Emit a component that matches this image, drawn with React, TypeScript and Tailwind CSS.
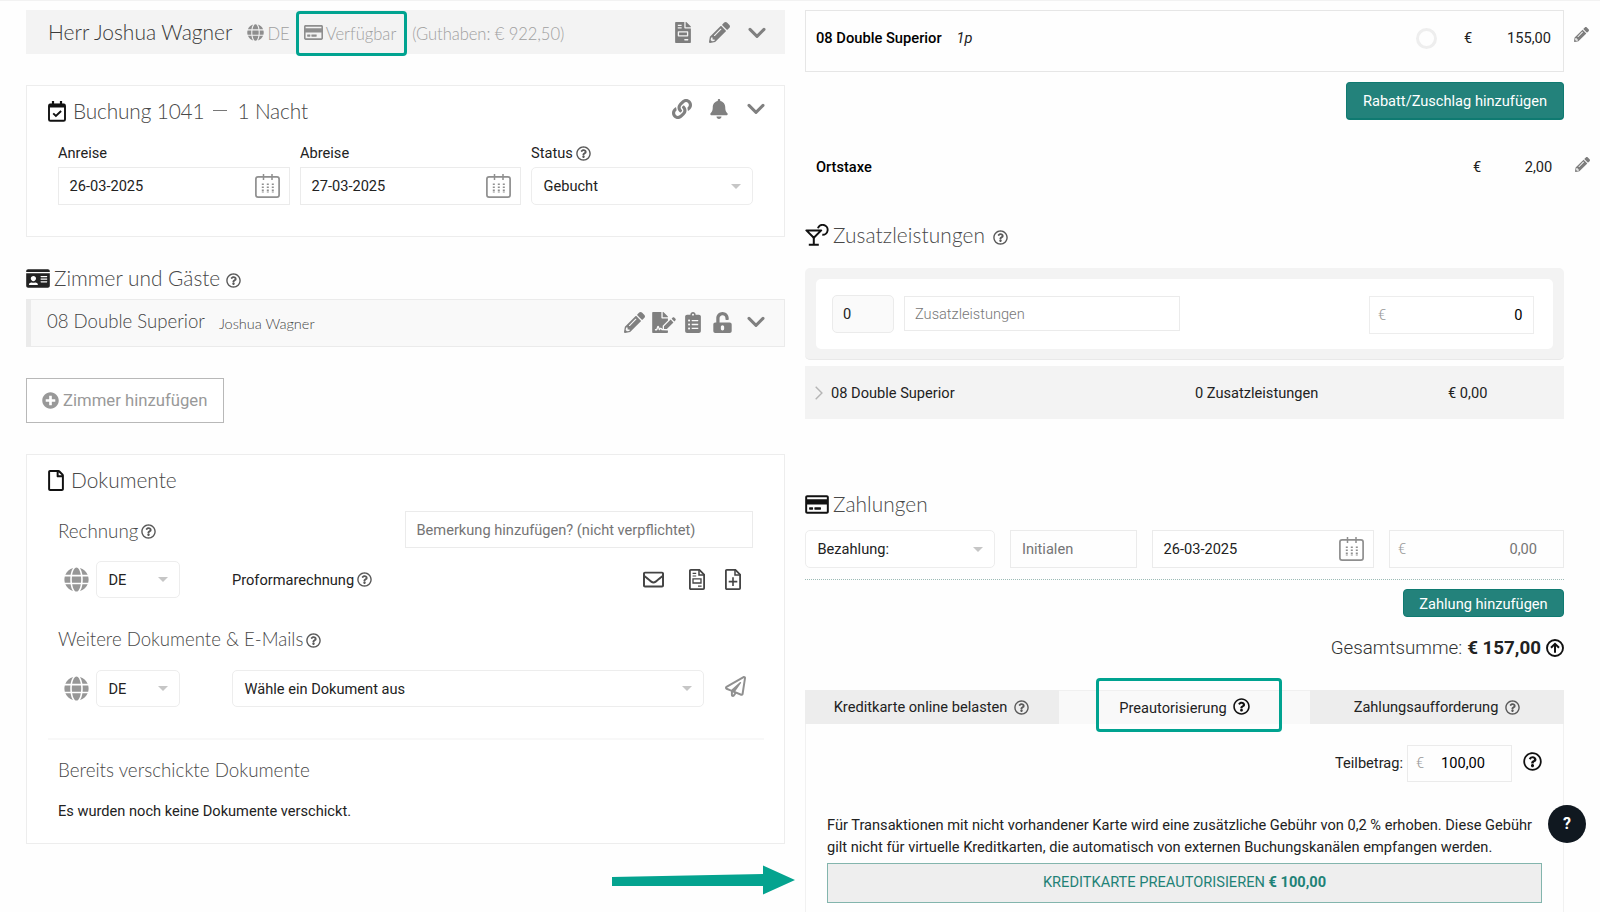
import React from 'react';
import {
  FaBell,
  FaClipboardList,
  FaFileInvoice,
  FaFileSignature,
  FaGlobe,
  FaIdCard,
  FaLink,
  FaPencilAlt,
  FaPlusCircle,
  FaRegCreditCard,
  FaRegEnvelope,
  FaRegFile,
  FaRegPaperPlane,
  FaRegQuestionCircle,
  FaUnlockAlt,
} from 'react-icons/fa';

type IconProps = { className?: string };

const Help: React.FC<IconProps> = ({ className = 'text-[#5a5a5a]' }) => (
  <FaRegQuestionCircle className={`h-[15px] w-[15px] shrink-0 ${className}`} />
);

const Chevron: React.FC = () => (
  <svg viewBox="0 0 18 12" className="h-3 w-[18px] shrink-0" fill="none" stroke="#808080" strokeWidth="3" strokeLinecap="round" strokeLinejoin="round">
    <path d="M2 2.4 9 9.4 16 2.4" />
  </svg>
);

const CalendarIcon: React.FC = () => (
  <svg viewBox="0 0 25 24" className="h-6 w-[25px] shrink-0" fill="none" stroke="#8f8f8f">
    <rect x="0.9" y="2.9" width="23.2" height="20.2" rx="2.2" strokeWidth="1.7" />
    <path d="M8.5 0v6M17 0v6" strokeWidth="1.5" />
    <path d="M6.8 10.3h12M6.8 13.3h12M6.8 16.2h12" strokeWidth="1.5" strokeDasharray="2 3" />
    <path d="M6.8 18h12" strokeWidth="1" strokeDasharray="2 3" />
  </svg>
);

const CalendarCheck: React.FC = () => (
  <svg viewBox="0 0 18 21" className="h-[21px] w-[18px] shrink-0" fill="none" stroke="#111">
    <rect x="1" y="3.4" width="16" height="16.4" rx="1.4" strokeWidth="1.9" />
    <path d="M1 4.7h16" strokeWidth="3.6" />
    <path d="M5 0v4M13 0v4" strokeWidth="2.2" />
    <path d="m5.2 12.3 2.7 2.7 5.2-5" strokeWidth="1.9" />
  </svg>
);

const Cocktail: React.FC = () => (
  <svg viewBox="0 0 24 22" className="h-[22px] w-6 shrink-0" fill="none" stroke="#111" strokeWidth="2">
    <path d="M1.4 6.4h14.8L8.8 13.8z" strokeLinejoin="round" />
    <path d="M8.8 13.5v7M3.8 20.8h10" />
    <path d="M12.9 4.2a5 5 0 1 1 4.4 6.6" strokeWidth="1.9" />
  </svg>
);

const FileInvoiceOutline: React.FC = () => (
  <svg viewBox="0 0 16 21" className="h-[21px] w-4" fill="none" stroke="#444" strokeWidth="1.8">
    <path d="M2 .9h8.4l4.7 4.7v13.6a.9.9 0 0 1-.9.9H1.8a.9.9 0 0 1-.9-.9V1.8a.9.9 0 0 1 .9-.9z" />
    <path d="M10 1v4.9h5" strokeWidth="1.5" />
    <path d="M3.6 4.4h3.6M3.6 7h3.6M9 17.1h3.6" strokeWidth="1.1" />
    <path d="M4 9.8h8v4.2H4z" strokeWidth="1.3" />
  </svg>
);

const FilePlus: React.FC = () => (
  <svg viewBox="0 0 16 21" className="h-[21px] w-4" fill="none" stroke="#444" strokeWidth="1.8">
    <path d="M2 .9h8.4l4.7 4.7v13.6a.9.9 0 0 1-.9.9H1.8a.9.9 0 0 1-.9-.9V1.8a.9.9 0 0 1 .9-.9z" />
    <path d="M10 1v4.9h5" strokeWidth="1.5" />
    <path d="M8 8.3v8.6M3.7 12.6h8.6" strokeWidth="1.6" />
  </svg>
);

const CreditCard: React.FC<IconProps> = ({ className = '' }) => <FaRegCreditCard className={`shrink-0 ${className}`} />;

const Caret: React.FC = () => (
  <span className="h-0 w-0 shrink-0 border-x-[5px] border-t-[5px] border-x-transparent border-t-[#c6c6c6]"></span>
);

const Select: React.FC<{ label: string; className: string }> = ({ label, className }) => (
  <div className={`flex items-center justify-between rounded-[5px] border border-[#ededed] bg-white pl-[11.5px] pr-[11px] ${className}`}>
    <span className="pt-[2px]">{label}</span>
    <Caret />
  </div>
);

const DateInput: React.FC<{ value: string; className: string }> = ({ value, className }) => (
  <div className={`flex h-[38px] items-center justify-between border border-[#ebebeb] bg-white pl-[10.5px] pr-[9px] ${className}`}>
    <span className="pt-[2px]">{value}</span>
    <CalendarIcon />
  </div>
);

const SectionTitle: React.FC<{ children: React.ReactNode }> = ({ children }) => (
  <h2 className="font-['Lato'] text-[20.85px] font-light leading-6 text-[#484848]">{children}</h2>
);

const LanguageSelect: React.FC = () => (
  <>
    <FaGlobe className="ml-4 h-[25px] w-[25px] text-[#979797]" />
    <Select label="DE" className="ml-[7px] h-[37px] w-[84px]" />
  </>
);

const GuestBar: React.FC = () => (
  <div className="relative flex h-11 items-center bg-[#f3f3f3] pl-[22px] pr-[19px] font-['Lato'] font-light">
    <span className="text-[21px] leading-6 text-[#3a3a3a]">Herr Joshua Wagner</span>
    <div className="flex items-center text-[16.6px] text-[#a0a0a0]">
      <FaGlobe className="ml-[15px] mt-[2px] h-[17px] w-[17px] text-[#8e8e8e]" />
      <span className="ml-[3px] pt-[4px]">DE</span>
      <CreditCard className="ml-[14px] mt-[2px] h-[17px] w-[19px] text-[#8e8e8e]" />
      <span className="ml-[3px] pt-[4px]">Verfügbar</span>
      <span className="ml-[16px] pt-[4px] tracking-[-0.08px]">(Guthaben: € 922,50)</span>
    </div>
    <div className="ml-auto flex items-center text-[#7d7d7d]">
      <FaFileInvoice className="h-[21px] w-4" />
      <FaPencilAlt className="ml-[18px] mr-[18px] h-[21px] w-[21px]" />
      <span className="pt-[2px]"><Chevron /></span>
    </div>
    <div className="absolute left-[270px] top-[1px] h-[45px] w-[111px] rounded-[4px] border-[3px] border-[#00a390]"></div>
  </div>
);

const BookingCard: React.FC = () => (
  <div className="mt-[31px] h-[152px] border border-[#ededed] bg-white">
    <div className="flex h-[48px] items-center pl-[21px] pr-[19px]">
      <span className="pt-[2px]"><CalendarCheck /></span>
      <div className="ml-[7px] flex items-center pt-[1px] tracking-[-0.15px]">
        <SectionTitle>Buchung 1041</SectionTitle>
        <span className="mx-[9px] h-px w-[14px] bg-[#777]"></span>
        <span className="ml-[1px]"><SectionTitle>1 Nacht</SectionTitle></span>
      </div>
      <div className="ml-auto flex items-center pb-[3px] text-[#808080]">
        <FaLink className="h-[20px] w-[20px]" />
        <FaBell className="ml-[18px] mr-[19px] h-5 w-[18px]" />
        <Chevron />
      </div>
    </div>
    <div className="mt-[9px] flex pl-[31px]">
      <div className="w-[242px]">
        <div className="mb-1 h-5 leading-5">Anreise</div>
        <DateInput value="26-03-2025" className="w-[232px]" />
      </div>
      <div className="w-[231px]">
        <div className="mb-1 h-5 leading-5">Abreise</div>
        <DateInput value="27-03-2025" className="w-[221px]" />
      </div>
      <div>
        <div className="mb-1 flex h-5 items-center gap-[3px] leading-5">Status <Help /></div>
        <Select label="Gebucht" className="h-[38px] w-[222px]" />
      </div>
    </div>
  </div>
);

const RoomsSection: React.FC = () => (
  <>
    <div className="mt-[30px] flex h-[22px] items-center">
      <FaIdCard className="h-[21px] w-6 text-[#222]" />
      <div className="ml-[4px]"><SectionTitle>Zimmer und Gäste</SectionTitle></div>
      <div className="ml-[6px] pt-[4px]"><Help /></div>
    </div>
    <div className="mt-[10px] flex h-12 items-center border border-l-[5px] border-[#ebebeb] bg-[#f9f9f9] pl-4 pr-[19px] font-['Lato'] font-light text-[#444]">
      <span className="pb-[2px] text-[18.6px]">08 Double Superior</span>
      <span className="ml-[14px] pt-[1px] text-[14.5px]">Joshua Wagner</span>
      <div className="ml-auto flex items-center pb-[2px] text-[#808080]">
        <FaPencilAlt className="h-[21px] w-[21px]" />
        <FaFileSignature className="ml-[7px] h-[21px] w-6" />
        <FaClipboardList className="ml-[9px] h-[21px] w-4" />
        <FaUnlockAlt className="ml-[12px] mr-[15px] h-[21px] w-[19px]" />
        <Chevron />
      </div>
    </div>
    <button className="mt-[31px] flex h-[45px] w-[198px] items-center border border-[#b8b8b8] bg-white pl-[15px] text-[16.7px] text-[#999]">
      <FaPlusCircle className="mr-[4px] h-[17px] w-[17px]" />
      Zimmer hinzufügen
    </button>
  </>
);

const DocumentsCard: React.FC = () => (
  <div className="mt-[31px] h-[390px] border border-[#ededed] bg-white">
    <div className="flex h-[50px] items-center pl-[21px]">
      <FaRegFile className="h-[21px] w-4 text-[#111]" />
      <div className="ml-[7px]"><SectionTitle>Dokumente</SectionTitle></div>
    </div>
    <div className="mt-[6px] flex h-[37px] items-center pl-[31px] pr-[31px]">
      <div className="flex items-center gap-[3px] pt-[4px] font-['Lato'] text-[18.8px] font-light text-[#484848]">
        Rechnung <Help />
      </div>
      <div className="ml-auto flex h-[37px] w-[348px] items-center border border-[#ebebeb] pl-[10.5px] pt-[2px] text-[#757575]">
        Bemerkung hinzufügen? (nicht verpflichtet)
      </div>
    </div>
    <div className="mt-[13px] flex h-[37px] items-center pl-[21px] pr-[43px]">
      <LanguageSelect />
      <span className="ml-[52px] mr-[3px] pt-[2px]">Proformarechnung</span>
      <Help />
      <div className="ml-auto flex items-center text-[#444]">
        <FaRegEnvelope className="h-[21px] w-[21px]" />
        <span className="ml-[25px] mr-5"><FileInvoiceOutline /></span>
        <FilePlus />
      </div>
    </div>
    <div className="mt-[30px] flex h-6 items-center gap-[3px] pl-[31px] font-['Lato'] text-[18.6px] font-light text-[#484848]">
      Weitere Dokumente &amp; E-Mails <Help />
    </div>
    <div className="mt-[18px] flex h-[37px] items-center pl-[21px]">
      <LanguageSelect />
      <Select label="Wähle ein Dokument aus" className="ml-[52px] h-[37px] w-[472px]" />
      <FaRegPaperPlane className="mb-1 ml-[21px] h-[21px] w-[21px] text-[#909090]" />
    </div>
    <div className="ml-[21px] mr-[20px] mt-[31px] h-[2px] bg-[#f8f8f8]"></div>
    <div className="mt-[18px] h-6 pl-[31px] font-['Lato'] text-[18.8px] font-light leading-6 text-[#484848]">
      Bereits verschickte Dokumente
    </div>
    <p className="mt-[19px] pl-[31px] leading-5">Es wurden noch keine Dokumente verschickt.</p>
  </div>
);

const PricesSection: React.FC = () => (
  <>
    <div className="flex">
      <div className="flex h-[62px] w-[759px] items-center border border-[#e6e6e6] pb-[5px] pl-2.5 pr-[12px]">
        <span className="text-[14.7px] font-medium text-black">08 Double Superior</span>
        <span className="ml-[15px] italic">1p</span>
        <span className="ml-auto h-[21px] w-[21px] rounded-full border-[3px] border-[#eee]"></span>
        <span className="ml-[27px] w-[9px]">€</span>
        <span className="ml-[33px] w-[45px] text-right">155,00</span>
      </div>
      <FaPencilAlt className="ml-[10px] mt-[17px] h-[15px] w-[15px] text-[#7d7d7d]" />
    </div>
    <button className="ml-[541px] mt-[10px] h-[38px] w-[218px] rounded-[4px] border border-b-2 border-[#0f7a71] bg-[#23827b] pt-[2px] text-white">
      Rabatt/Zuschlag hinzufügen
    </button>
    <div className="mt-[38px] flex h-5 items-center pl-[11px]">
      <span className="w-[657px] font-medium text-black">Ortstaxe</span>
      <span>€</span>
      <span className="ml-[11px] w-[60px] text-right">2,00</span>
      <FaPencilAlt className="mb-[8px] ml-[23px] h-[15px] w-[15px] text-[#7d7d7d]" />
    </div>
  </>
);

const ExtrasSection: React.FC = () => (
  <div className="w-[759px]">
    <div className="mt-[45px] flex h-6 items-center">
      <Cocktail />
      <div className="ml-[4px] tracking-[0.1px]"><SectionTitle>Zusatzleistungen</SectionTitle></div>
      <div className="ml-[8px] pt-[4px]"><Help /></div>
    </div>
    <div className="mt-[21px] h-[92px] rounded-[5px] border-b border-[#e9e9e9] bg-[#f3f3f3] px-[11px] pt-[11px]">
      <div className="flex h-[70px] items-start rounded-[5px] bg-white pl-4 pr-[19px] pt-4">
        <div className="flex h-[38px] w-[62px] items-center rounded-[5px] border border-[#ebebeb] bg-[#fafafa] pl-2.5 pt-[1px]">0</div>
        <div className="ml-[10px] mt-[1px] flex h-[35px] w-[276px] items-center border border-[#ebebeb] pl-2.5 pt-[2px] font-light text-[#777]">Zusatzleistungen</div>
        <div className="ml-auto mt-[1px] flex h-[38px] w-[165px] items-center justify-between border border-[#ededed] pl-2 pr-[10.5px] pt-[1px]">
          <span className="font-light text-[#999]">€</span>
          <span className="text-black">0</span>
        </div>
      </div>
    </div>
    <div className="mt-[6px] flex h-[53px] items-center bg-[#f3f3f3] pl-[10px]">
      <svg viewBox="0 0 8 14" className="h-[14px] w-2" fill="none" stroke="#b5b5b5" strokeWidth="1.4">
        <path d="m.7.8 6.2 6.2-6.2 6.2" />
      </svg>
      <span className="ml-[8px] w-[364px] pt-[2px]">08 Double Superior</span>
      <span className="w-[253px] pt-[2px]">0 Zusatzleistungen</span>
      <span className="pt-[2px]">€ 0,00</span>
    </div>
  </div>
);

const tabs = ['Kreditkarte online belasten', 'Preautorisierung', 'Zahlungsaufforderung'];

const PaymentsSection: React.FC = () => (
  <div className="w-[759px]">
    <div className="mt-[73px] flex h-6 items-center">
      <CreditCard className="h-[21px] w-6 text-[#111]" />
      <div className="ml-[4px] tracking-[0.05px]"><SectionTitle>Zahlungen</SectionTitle></div>
    </div>
    <div className="mt-[14px] flex">
      <Select label="Bezahlung:" className="h-[38px] w-[190px]" />
      <div className="ml-[15px] flex h-[38px] w-[127px] items-center border border-[#ebebeb] pl-[11px] pt-[2px] text-[#757575]">Initialen</div>
      <DateInput value="26-03-2025" className="ml-[15px] w-[222px]" />
      <div className="ml-[15px] flex h-[38px] w-[175px] items-center justify-between border border-[#ebebeb] pl-2 pr-[26px] pt-[2px] text-[#757575]">
        <span className="font-light text-[#999]">€</span>
        <span>0,00</span>
      </div>
    </div>
    <div className="mt-[11px] border-t border-dotted border-[#9dbbb6]"></div>
    <button className="ml-[598px] mt-[9px] block h-7 w-[161px] rounded-[4px] border border-[#0f7a71] bg-[#23827b] pt-[2px] leading-[22px] text-white">
      Zahlung hinzufügen
    </button>
    <div className="mt-[19px] flex h-6 items-center justify-end text-[18.75px]">
      <span className="font-light text-[#333]">Gesamtsumme:</span>
      <span className="ml-[5px] font-bold text-[#222]">€ 157,00</span>
      <svg viewBox="0 0 18 18" className="ml-[5px] h-[18px] w-[18px]" fill="none" stroke="#111" strokeWidth="1.9">
        <circle cx="9" cy="9" r="8" />
        <path d="M9 13.8V4.8M5 8.8l4-4 4 4" strokeWidth="2" />
      </svg>
    </div>
    <div className="relative mt-[30px] flex h-[34px]">
      {tabs.map((tab, i) => (
        <div
          key={tab}
          className={`flex items-center justify-center ${i === 1 ? 'w-[251px] border-t border-[#f0f0f0] bg-[#f9f9f9]' : 'w-[254px] bg-[#ededed]'} ${i === 0 ? 'pr-[1px]' : ''}`}
        >
          <span className="pt-[2px]">{tab}</span>
          {i === 1 ? (
            <FaRegQuestionCircle className="mb-[2px] ml-[6px] h-[17px] w-[17px] text-[#111]" />
          ) : (
            <span className="ml-[7px]"><Help /></span>
          )}
        </div>
      ))}
      <div className="absolute left-[291px] top-[-12px] h-[54px] w-[186px] rounded-[4px] border-[3.5px] border-[#00a390]"></div>
    </div>
    <div className="h-[200px] border-x border-[#f1f1f1] px-[21px] pt-[21px]">
      <div className="flex h-[37px] items-center justify-end">
        <span className="pt-[1px]">Teilbetrag:</span>
        <div className="ml-[4px] flex h-[37px] w-[105px] items-center border border-[#ebebeb] pl-2 pt-[1px] text-black">
          <span className="font-light text-[#999]">€</span>
          <span className="ml-[17px]">100,00</span>
        </div>
        <FaRegQuestionCircle className="mb-[5px] ml-[11px] h-[19px] w-[19px] text-[#111]" />
      </div>
      <p className="mt-[32px] whitespace-nowrap leading-[22.4px]">
        Für Transaktionen mit nicht vorhandener Karte wird eine zusätzliche Gebühr von 0,2 % erhoben. Diese Gebühr<br />
        gilt nicht für virtuelle Kreditkarten, die automatisch von externen Buchungskanälen empfangen werden.
      </p>
      <button className="mt-[4px] h-[40px] w-full border border-[#83b5ad] bg-[#eee] pt-[1px] text-[#1f8277]">
        KREDITKARTE PREAUTORISIEREN <b className="font-bold">€ 100,00</b>
      </button>
    </div>
  </div>
);

export default function App() {
  return (
    <div className="relative h-[912px] w-[1600px] overflow-hidden border-t border-[#f2f2f2] bg-[#fefefe] pl-[26px] pt-[9px] font-['Roboto',sans-serif] text-[14.62px] text-[#222]">
      <div className="flex gap-[20px]">
        <div className="w-[759px]">
          <GuestBar />
          <BookingCard />
          <RoomsSection />
          <DocumentsCard />
        </div>
        <div className="w-[795px]">
          <PricesSection />
          <ExtrasSection />
          <PaymentsSection />
        </div>
      </div>

      {/* pointer to the pre-authorisation button */}
      <svg viewBox="0 0 183 30" className="absolute left-[612px] top-[864px] h-[30px] w-[183px]" fill="#04a38f">
        <path d="M0 12 151 9V.5L183 15 151 29.5V21H0z" />
      </svg>
      <button className="absolute left-[1548px] top-[804px] flex h-[38px] w-[38px] items-center justify-center rounded-full bg-[#101820] text-[16px] font-bold text-white">
        ?
      </button>
    </div>
  );
}
